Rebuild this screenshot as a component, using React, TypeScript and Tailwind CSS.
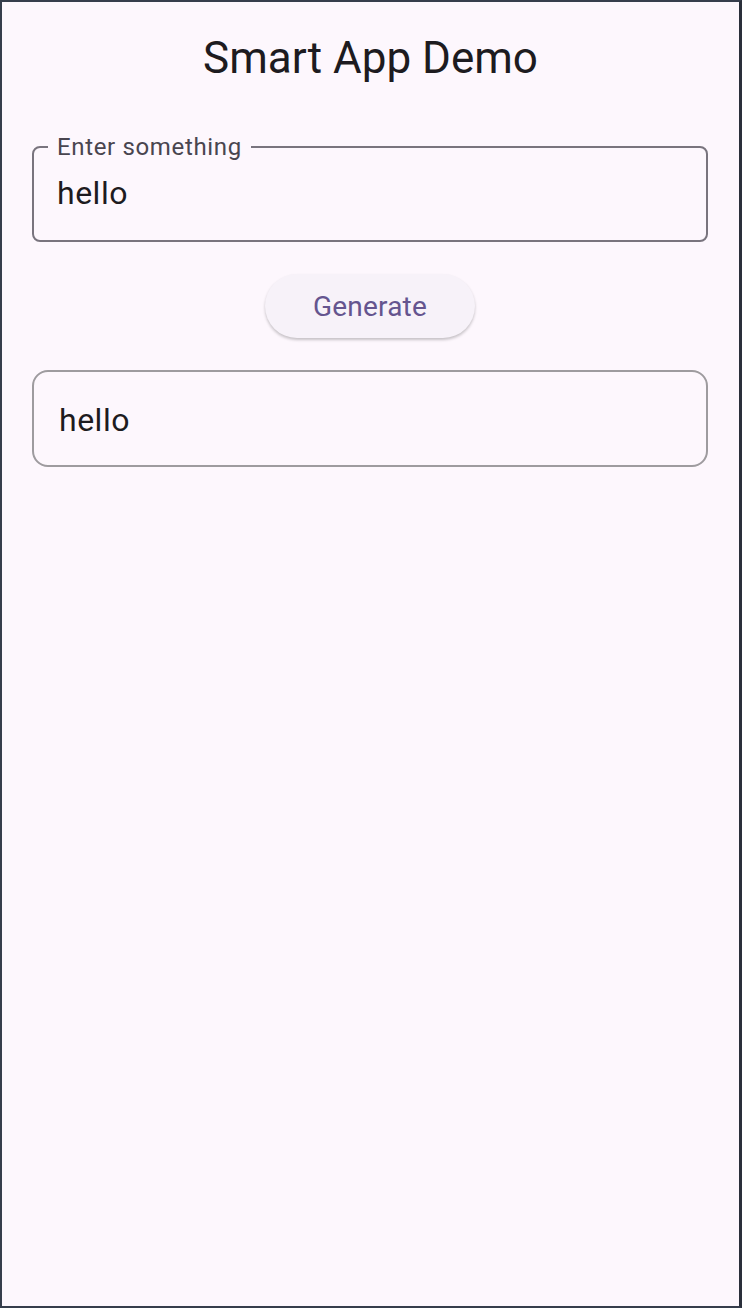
import React from "react";

const font = { fontFamily: "Roboto, 'Noto Sans', sans-serif" };

export default function App() {
  return (
    <div
      className="w-[742px] h-[1308px] bg-[#fdf7fd] border-2 border-[#363d4c] border-r-[3px] border-r-[#2a2f3a] flex flex-col"
      style={font}
    >
      {/* App bar */}
      <header className="h-[110px] flex items-center justify-center">
        <h1 className="text-[44px] leading-none text-[#1d1b20] mt-[1px]">Smart App Demo</h1>
      </header>

      <main className="pl-[30px] pr-[31px] pt-[35px] flex flex-col">
        {/* Outlined text field */}
        <fieldset className="h-[106px] border-2 border-[#79747e] rounded-[8px] px-[14px] pb-[6px] -mt-[11px]">
          <legend className="px-[9px] text-[24px] leading-[22px] tracking-[0.65px] text-[#49454f]">
            Enter something
          </legend>
          <div className="pl-[9px] pt-[19px] text-[32px] leading-none tracking-[0.5px] text-[#1d1b20]">hello</div>
        </fieldset>

        {/* Button */}
        <div className="flex justify-center mt-[32px]">
          <button className="w-[210px] h-[64px] rounded-full bg-[#f7f2f9] text-[#65558f] text-[28px] tracking-[0.2px] pt-[2px] shadow-[0_2px_3px_rgba(0,0,0,0.22)]">
            Generate
          </button>
        </div>

        {/* Output box */}
        <div className="mt-[32px] h-[97px] border-2 border-[#9e9b9f] rounded-[16px] flex items-center px-[25px]">
          <span className="text-[32px] leading-none tracking-[0.5px] text-[#1d1b20] mt-[2px]">hello</span>
        </div>
      </main>
    </div>
  );
}
